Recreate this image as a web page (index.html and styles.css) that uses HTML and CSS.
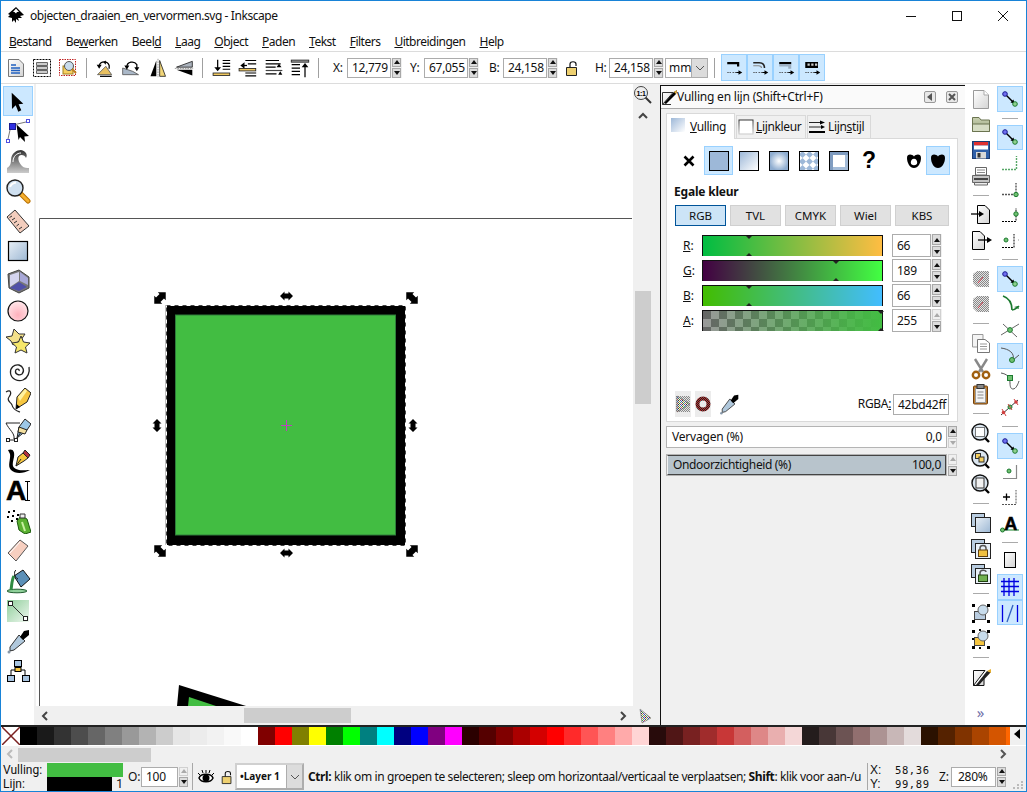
FILE: index.html
```html
<!DOCTYPE html>
<html lang="nl">
<head>
    <meta charset="UTF-8">
    <title>objecten_draaien_en_vervormen.svg - Inkscape</title>
    <link rel="stylesheet" href="styles.css">
</head>
<body>
<svg class="sprite" xmlns="http://www.w3.org/2000/svg">
    <defs>
        <linearGradient id="gBlueDown" x1="0" y1="0" x2="1" y2="1"><stop offset="0" stop-color="#e8eff6"/><stop offset="1" stop-color="#9db8d4"/></linearGradient>
        <linearGradient id="gFade" x1="0" y1="0" x2="1" y2="1"><stop offset="0" stop-color="#9db8d8"/><stop offset="1" stop-color="#fff"/></linearGradient>
        <radialGradient id="gPink" cx=".5" cy=".7" r=".7"><stop offset="0" stop-color="#ffb0bc"/><stop offset="1" stop-color="#ffe9ec"/></radialGradient>
        <linearGradient id="gGrey" x1="0" y1="0" x2="0" y2="1"><stop offset="0" stop-color="#333"/><stop offset="1" stop-color="#ccc"/></linearGradient>
        <linearGradient id="gPaper" x1="0" y1="0" x2="1" y2="1"><stop offset="0" stop-color="#fff"/><stop offset="1" stop-color="#d4d4d4"/></linearGradient>
        <linearGradient id="gGreen" x1="0" y1="0" x2="1" y2="1"><stop offset="0" stop-color="#8fce9a"/><stop offset="1" stop-color="#eef7ef"/></linearGradient>
        <linearGradient id="gFolder" x1="0" y1="0" x2="0" y2="1"><stop offset="0" stop-color="#c8d0b0"/><stop offset="1" stop-color="#9aa680"/></linearGradient>
        <pattern id="pCheck" width="7" height="7" patternUnits="userSpaceOnUse"><rect width="7" height="7" fill="#fff"/><path d="M3.500 0 7 3.500 3.500 7 0 3.500z" fill="#9db8d8"/></pattern>
        <pattern id="pDots" width="2" height="2" patternUnits="userSpaceOnUse"><rect width="2" height="2" fill="#e4e4e4"/><rect width="1" height="1" fill="#888"/><rect x="1" y="1" width="1" height="1" fill="#888"/></pattern>
        <pattern id="pRed" width="2" height="2" patternUnits="userSpaceOnUse"><rect width="2" height="2" fill="#222"/><rect width="1" height="1" fill="#c03030"/><rect x="1" y="1" width="1" height="1" fill="#c03030"/></pattern>
        <pattern id="pColor" width="4" height="4" patternUnits="userSpaceOnUse"><rect width="4" height="4" fill="#eee"/><rect width="1" height="1" fill="#3a9a3a"/><rect x="2" width="1" height="1" fill="#c05050"/><rect x="1" y="1" width="1" height="1" fill="#6a3aa0"/><rect x="3" y="1" width="1" height="1" fill="#333"/><rect y="2" width="1" height="1" fill="#c0a030"/><rect x="2" y="2" width="1" height="1" fill="#3060c0"/><rect x="1" y="3" width="1" height="1" fill="#40a080"/><rect x="3" y="3" width="1" height="1" fill="#555"/></pattern>

        <!-- gereedschap links -->
        <symbol id="t-select" viewBox="0 0 26 26"><path d="M6.700 4.700 18.300 15.700 13.600 16.300 16.300 22.300 13.300 23.700 10.700 17.300 7 21z"/></symbol>
        <symbol id="t-node" viewBox="0 0 26 26"><path d="M8 7 21 4M5 12 3 21" fill="none" stroke="#777"/><rect x="4.500" y="5.500" width="6" height="6" fill="#3030e0" stroke="#1a1a90"/><rect x="21.500" y="1.500" width="3" height="3" fill="#fff" stroke="#5050e0"/><rect x="1.500" y="21.500" width="3" height="3" fill="#fff" stroke="#5050e0"/><path d="M11.500 6.500 24 18 19.400 18.400 20 24 15 19 13.500 22z"/></symbol>
        <symbol id="t-tweak" viewBox="0 0 26 26"><path d="M2 25V20C4 19 6 17 6 12 6 5 12 2 16 2 21 3 23 7 21 10 20 7 16 6 14 8 12 11 15 16 17 18 19 20 22 20 24 20V25z" fill="url(#gGrey)"/><path d="M8 14C8 8 12 5 16 5" fill="none" stroke="#fff"/></symbol>
        <symbol id="t-zoom" viewBox="0 0 26 26"><path d="M15 15 23 23" stroke="#b87000" stroke-width="5" stroke-linecap="round"/><path d="M15.500 15.500 23 23" stroke="#f5b030" stroke-width="3" stroke-linecap="round"/><circle cx="10" cy="10" r="8" fill="#cfe0f0" stroke="#222" stroke-width="1.400"/><path d="M5 9C6 6 8 5 11 4.500" fill="none" stroke="#fff" stroke-width="2"/></symbol>
        <symbol id="t-measure" viewBox="0 0 26 26"><path d="M2 9 10 2 24 18 15 25z" fill="#f3cdbd" stroke="#333"/><path d="M4.500 9.500 7 8M7 12 10 10M9 15 12 13M11.500 18 14 16M14 21 17 19" stroke="#333" fill="none"/></symbol>
        <symbol id="t-rect" viewBox="0 0 26 26"><rect x="3.500" y="3.500" width="19" height="19" fill="url(#gBlueDown)" stroke="#000" stroke-width="1.200"/></symbol>
        <symbol id="t-box" viewBox="0 0 26 26"><path d="M3 6 14 2 24 9V20L14 25 4 20z" fill="#777" stroke="#444"/><path d="M5 7 14 4V13L5 19z" fill="#d4d4ee"/><path d="M15 4 23 10V17L15 13z" fill="#a8a8d8"/><path d="M5 20 14 14 22 19 14 23z" fill="#5050a8"/></symbol>
        <symbol id="t-ellipse" viewBox="0 0 26 26"><circle cx="13" cy="13" r="10" fill="url(#gPink)" stroke="#111" stroke-width="1.200"/></symbol>
        <symbol id="t-star" viewBox="0 0 26 26"><path d="M1 9 7 8 9 1 14 6 20 6 16 12 8 17 6 13z" fill="#f3e08a" stroke="#333"/><path d="M16 8 18.500 14 25 15 20.500 19 22 25 16 22 10 25 11.500 19 7 15 13.500 14z" fill="#f6e76a" stroke="#333"/></symbol>
        <symbol id="t-spiral" viewBox="0 0 26 26"><path d="M14 13C15 11 11 10 10.500 13 10 16 14 18 17 16 20 13 18 8 14 7 9 6 5 10 5.500 15 6 21 13 24 18 22 23 20 25 14 24 9" fill="none" stroke="#222" stroke-width="1.300"/></symbol>
        <symbol id="t-pencil" viewBox="0 0 26 26"><path d="M1 4C6 1 7 5 4 9 1 13 6 14 7 17 8 22 12 23 15 24" fill="none" stroke="#222" stroke-width="1.200"/><path d="M11 21 12 9 20 0 26 5 22 14z" fill="#f6c640" stroke="#222"/><path d="M13 9 20 1 22 3 15 13z" fill="#fff2a0"/><path d="M11 21 11.500 16 15 19z"/></symbol>
        <symbol id="t-pen" viewBox="0 0 26 26"><path d="M1 5H15M1 5C4 12 10 15 9 21" fill="none" stroke="#222"/><rect x="1.500" y="20.500" width="3" height="3" fill="#fff" stroke="#222"/><rect x="9.500" y="20.500" width="3" height="3" fill="#fff" stroke="#222"/><path d="M4 22H10" stroke="#222"/><path d="M12 20 14 9 20 1 26 6 22 12z" fill="#9cc8e8" stroke="#222"/><path d="M12 20 18 11" stroke="#222"/><path d="M14 9 22 12 20 16 13 14z" fill="#f4e0a0" stroke="#222"/></symbol>
        <symbol id="t-calli" viewBox="0 0 26 26"><path d="M3 2C8 0 10 4 9 9 8 14 6 19 11 21 15 23 19 22 25 22 18 26 10 26 6 22 2 18 6 11 5 6z"/><path d="M11 18 13 9 18 5 23 10 19 13z" fill="#f6c640" stroke="#222"/><path d="M18 5 20 2 25 7 23 10z" fill="#b03040" stroke="#222"/><path d="M11 18 16 11" stroke="#222"/></symbol>
        <symbol id="t-spray" viewBox="0 0 26 26"><path d="M12 13 16 8 22 11 26 24 20 26 14 22z" fill="#5ab030" stroke="#1d5a10"/><path d="M15 6H20V10H15z" fill="#eee" stroke="#333"/><path d="M17 14 20 23" stroke="#c8f0a0" stroke-width="2"/><path d="M3 3h2v2H3zM8 2h2v2H8zM2 8h2v2H2zM7 7h2v2H7zM12 6h2v2h-2zM6 12h2v2H6zM11 10h2v2h-2z"/></symbol>
        <symbol id="t-eraser" viewBox="0 0 26 26"><path d="M3 15 15 2 23 8 11 23z" fill="#f7cfc0" stroke="#555"/><path d="M5 15 15 4" stroke="#fff"/></symbol>
        <symbol id="t-bucket" viewBox="0 0 26 26"><ellipse cx="12" cy="23" rx="10" ry="1.800" fill="#8fd09a" stroke="#225c30"/><path d="M9 8 18 2 25 11 16 19z" fill="#5c90b8" stroke="#111"/><path d="M9 8C7 11 7 15 6 22" fill="none" stroke="#2f8a42" stroke-width="3"/><path d="M11 2C8 4 10 10 13 11" fill="none" stroke="#111"/></symbol>
        <symbol id="t-gradient" viewBox="0 0 26 26"><rect x="2" y="2" width="22" height="22" fill="url(#gGreen)"/><path d="M6 6 20 20" stroke="#333"/><rect x="3.500" y="3.500" width="4" height="4" fill="#fff" stroke="#222"/><rect x="18.500" y="18.500" width="4" height="4" fill="#fff" stroke="#222"/></symbol>
        <symbol id="t-dropper" viewBox="0 0 26 26"><path d="M14 7 20 13 9 22 5 23 5 19z" fill="#b0c8dc" stroke="#333"/><path d="M15 9 19 3 24 2 24 7 18 12z"/><circle cx="4" cy="24" r="1.500" fill="#89a"/></symbol>
        <symbol id="t-conn" viewBox="0 0 26 26"><path d="M6 20V12H20V20M13 8V12" fill="none" stroke="#000"/><rect x="9.500" y="2.500" width="7" height="6" fill="#a8c4e0" stroke="#000"/><rect x="10" y="9.500" width="6" height="4" fill="#f6c640" stroke="#000"/><rect x="2.500" y="17.500" width="7" height="6" fill="#a8c4e0" stroke="#000"/><rect x="17.500" y="17.500" width="7" height="6" fill="#a8c4e0" stroke="#000"/></symbol>

        <!-- opdrachtenbalk -->
        <symbol id="c-docprops" viewBox="0 0 22 22"><path d="M3.500 2.500H14L18.500 7V19.500H3.500z" fill="url(#gPaper)" stroke="#777"/><path d="M6 8H11M6 11H15M6 13.500H15M6 16H15" stroke="#2060c0" stroke-width="1.300"/></symbol>
        <symbol id="c-zoomsel" viewBox="0 0 22 22"><rect x="2.500" y="2.500" width="17" height="17" fill="#fff" stroke="#000" stroke-dasharray="2 1"/><path d="M5.500 5.500H16.500V8.500H5.500zM5.500 9.500H16.500V12.500H5.500zM5.500 13.500H16.500V16.500H5.500z" fill="#ccc" stroke="#666"/></symbol>
        <symbol id="c-zoomdraw" viewBox="0 0 22 22"><rect x="2.500" y="2.500" width="16" height="16" fill="#fff" stroke="#c02020" stroke-dasharray="1.500 1"/><rect x="6" y="9" width="10" height="8" fill="#f6d060" stroke="#a08020"/><circle cx="12" cy="9" r="4.500" fill="#c8dcec" stroke="#555"/><path d="M15 12 19 16" stroke="#c08020" stroke-width="2"/></symbol>
        <symbol id="c-rotccw" viewBox="0 0 24 24"><path d="M3 20 13 10 20 20z" fill="#e8c060" stroke="#555"/><path d="M6 22H20" stroke="#000" stroke-width="1.500"/><path d="M5 9C7 3 15 3 17 9V13" fill="none" stroke="#000" stroke-width="1.500"/><path d="M2 8 8 8 5 13zM13 3V8L10 5z"/></symbol>
        <symbol id="c-rotcw" viewBox="0 0 24 24"><path d="M2 20V12L14 16 21 20z" fill="#aab8c8" stroke="#555"/><path d="M7 11C7 4 16 3 19 8V12" fill="none" stroke="#000" stroke-width="1.500"/><path d="M16 11H22L19 16zM7 14 4 9H10z"/></symbol>
        <symbol id="c-fliph" viewBox="0 0 24 24"><path d="M10 3 3 22H10z"/><path d="M14 3 21 22H14z" fill="#f2d678" stroke="#222"/><path d="M12 1V23" stroke="#888" stroke-dasharray="2 1"/></symbol>
        <symbol id="c-flipv" viewBox="0 0 24 24"><path d="M22 4 3 11H22z" fill="#aab2bc" stroke="#222"/><path d="M22 14 3 14 22 21z"/><path d="M1 12.500H23" stroke="#888" stroke-dasharray="2 1"/></symbol>
        <symbol id="c-bottom" viewBox="0 0 24 24"><path d="M14 3H23M14 6.500H23M14 10H23M14 13.500H23" stroke="#000" stroke-width="1.400"/><path d="M8 2V14" stroke="#000" stroke-width="1.500"/><path d="M4 11H12L8 16z"/><rect x="2.500" y="18" width="20" height="3" fill="#f0c860" stroke="#222"/></symbol>
        <symbol id="c-lower" viewBox="0 0 24 24"><path d="M10 3H23M13 7H23M10 18H23M10 21.500H23" stroke="#000" stroke-width="1.400"/><path d="M4 9 9 5V13z"/><path d="M8 9H12" stroke="#000" stroke-width="1.500"/><rect x="2.500" y="12.500" width="20" height="3" fill="#f0c860" stroke="#222"/></symbol>
        <symbol id="c-raise" viewBox="0 0 24 24"><path d="M2 3H18M2 7H20M2 11H14M2 19H15" stroke="#000" stroke-width="1.400"/><path d="M2 15H22" stroke="#444" stroke-width="1.400"/><path d="M15 11 21 11 18 7zM18 11V13" fill="#000"/><path d="M17 16H22L19.500 20z" transform="rotate(180 19.500 18)"/></symbol>
        <symbol id="c-top" viewBox="0 0 24 24"><rect x="1.500" y="2.500" width="21" height="2.500" fill="#999" stroke="#222"/><path d="M2 8H12M2 12H12M2 16H12M2 20H12" stroke="#000" stroke-width="1.500"/><path d="M18 23V9" stroke="#000" stroke-width="1.500"/><path d="M14 11 18 6 22 11z"/></symbol>
        <symbol id="c-pat1" viewBox="0 0 24 24"><path d="M3 4H19V10H16V7H3z"/><path d="M3 18H8M10 18H15" stroke="#333" stroke-dasharray="2 1"/><path d="M15 18H19" stroke="#000" stroke-width="1.400"/><path d="M18 15 23 18 18 21z"/></symbol>
        <symbol id="c-pat2" viewBox="0 0 24 24"><path d="M3 5H11C15 5 18 7 18 12" fill="none" stroke="#222" stroke-width="2"/><path d="M3 9H10C12 9 14 10 14 12" fill="none" stroke="#888" stroke-width="1.500"/><path d="M3 18H8M10 18H15" stroke="#333" stroke-dasharray="2 1"/><path d="M15 18H19" stroke="#000" stroke-width="1.400"/><path d="M18 15 23 18 18 21z"/></symbol>
        <symbol id="c-pat3" viewBox="0 0 24 24"><path d="M3 4H19V7H3z"/><path d="M3 7H19V13H15V10H3z" fill="#9cb0c4"/><path d="M3 18H8M10 18H15" stroke="#333" stroke-dasharray="2 1"/><path d="M15 18H19" stroke="#000" stroke-width="1.400"/><path d="M18 15 23 18 18 21z"/></symbol>
        <symbol id="c-pat4" viewBox="0 0 24 24"><rect x="3" y="4" width="17" height="8"/><path d="M6 6h3v3H6zM11 6h3v3h-3zM16 6h3v3h-3z" fill="#ccc"/><path d="M3 18H8M10 18H15" stroke="#333" stroke-dasharray="2 1"/><path d="M15 18H19" stroke="#000" stroke-width="1.400"/><path d="M18 15 23 18 18 21z"/></symbol>

        <!-- rechts: bestand en bewerken -->
        <symbol id="r-new" viewBox="0 0 22 22"><path d="M3.500 2.500H14L18.500 7V20.500H3.500z" fill="url(#gPaper)" stroke="#999"/><path d="M14 2.500V7H18.500" fill="#fff" stroke="#aaa"/></symbol>
        <symbol id="r-open" viewBox="0 0 22 22"><path d="M2.500 18.500V4.500H9L11 7H19.500V18.500z" fill="url(#gFolder)" stroke="#6b7450"/><path d="M2.500 11H19.500V18.500H2.500z" fill="#d6ddc4" stroke="#6b7450"/></symbol>
        <symbol id="r-save" viewBox="0 0 22 22"><rect x="2.500" y="2.500" width="17" height="17" fill="#2f5fa8" stroke="#1b3a70"/><rect x="4" y="3" width="14" height="3.500" fill="#e03030"/><rect x="4" y="6.500" width="14" height="4" fill="#fff"/><rect x="6" y="13" width="10" height="6.500" fill="#d8d8d8"/><rect x="7.500" y="14" width="3" height="4.500" fill="#333"/></symbol>
        <symbol id="r-print" viewBox="0 0 22 22"><path d="M5.500 2.500H16.500V10H5.500z" fill="#fff" stroke="#666"/><path d="M7 5H15M7 7.500H15" stroke="#888"/><path d="M2.500 10.500H19.500V17.500H2.500z" fill="#c4c4c4" stroke="#666"/><path d="M4 14H18" stroke="#444" stroke-width="2"/><path d="M4.500 17.500H17.500V20H4.500z" fill="#eee" stroke="#666"/></symbol>
        <symbol id="r-import" viewBox="0 0 22 22"><path d="M7.500 2.500H15L19.500 7V20.500H7.500z" fill="url(#gPaper)" stroke="#000"/><path d="M1 11H10" stroke="#000" stroke-width="1.300"/><path d="M9 8 14 11 9 14z"/></symbol>
        <symbol id="r-export" viewBox="0 0 22 22"><path d="M2.500 2.500H10L14.500 7V20.500H2.500z" fill="url(#gPaper)" stroke="#000"/><path d="M8 11H18" stroke="#000" stroke-width="1.300"/><path d="M17 8 22 11 17 14z"/></symbol>
        <symbol id="r-undo" viewBox="0 0 22 22"><path d="M3 6 7 3H19V19H7L3 15z" fill="url(#pDots)"/><path d="M13 9 8 15" stroke="#d04050"/></symbol>
        <symbol id="r-copy" viewBox="0 0 22 22"><path d="M2.500 2.500H13V15H2.500z" fill="#f4f4f4" stroke="#999"/><path d="M7.500 7.500H15L19.500 11V20.500H7.500z" fill="#fff" stroke="#777"/><path d="M10 12H17M10 14.500H17M10 17H17" stroke="#999"/></symbol>
        <symbol id="r-cut" viewBox="0 0 22 22"><path d="M5 1 13 14M17 1 9 14" stroke="#888" stroke-width="2.400"/><circle cx="6" cy="17" r="3.200" fill="none" stroke="#a06010" stroke-width="2.400"/><circle cx="16" cy="17" r="3.200" fill="none" stroke="#a06010" stroke-width="2.400"/></symbol>
        <symbol id="r-paste" viewBox="0 0 22 22"><rect x="3.500" y="3" width="14" height="18" rx="1" fill="#c08030" stroke="#704010"/><rect x="5.500" y="5.500" width="10" height="14" fill="#f4f4f4" stroke="#999"/><rect x="7" y="1.500" width="7" height="4" fill="#888" stroke="#333"/><path d="M7.500 9H13.500M7.500 12H13.500M7.500 15H13.500" stroke="#888"/></symbol>
        <symbol id="r-zoomsel" viewBox="0 0 22 22"><path d="M14 15 19 20" stroke="#000" stroke-width="2.400"/><circle cx="10" cy="10" r="8" fill="#dbe6f0" stroke="#111" stroke-width="1.400"/><rect x="5.500" y="5.500" width="9" height="9" fill="#fff" stroke="#000" stroke-dasharray="1 1"/></symbol>
        <symbol id="r-zoomdraw" viewBox="0 0 22 22"><path d="M14 15 19 20" stroke="#000" stroke-width="2.400"/><circle cx="10" cy="10" r="8" fill="#dbe6f0" stroke="#111" stroke-width="1.400"/><rect x="5.500" y="5.500" width="5" height="5" fill="#f6d060" stroke="#333"/><rect x="9" y="9" width="5" height="5" fill="#f6d060" stroke="#333"/></symbol>
        <symbol id="r-zoompage" viewBox="0 0 22 22"><path d="M14 15 19 20" stroke="#000" stroke-width="2.400"/><circle cx="10" cy="10" r="8" fill="#dbe6f0" stroke="#111" stroke-width="1.400"/><rect x="6" y="5" width="8" height="10" fill="#f2f2f2" stroke="#333"/></symbol>
        <symbol id="r-dup" viewBox="0 0 22 22"><rect x="1.500" y="1.500" width="13" height="13" fill="#b8cce0" stroke="#222"/><rect x="5.500" y="5.500" width="15" height="15" fill="url(#gBlueDown)" stroke="#222"/></symbol>
        <symbol id="r-clone" viewBox="0 0 22 22"><rect x="1.500" y="1.500" width="13" height="13" fill="#b8cce0" stroke="#222"/><rect x="5.500" y="5.500" width="15" height="15" fill="#e8f0f8" stroke="#222"/><path d="M10 12V10C10 6.500 16 6.500 16 10V12" fill="none" stroke="#555" stroke-width="1.500"/><rect x="8.500" y="12" width="9" height="6.500" fill="#f0c040" stroke="#604010"/></symbol>
        <symbol id="r-unlink" viewBox="0 0 22 22"><rect x="1.500" y="1.500" width="13" height="13" fill="#b8cce0" stroke="#222"/><rect x="5.500" y="5.500" width="15" height="15" fill="#e8f0f8" stroke="#222"/><path d="M10 12V10C10 6.500 16 6.500 16 9" fill="none" stroke="#555" stroke-width="1.500"/><rect x="8.500" y="12" width="9" height="6.500" fill="#70b050" stroke="#204010"/></symbol>
        <symbol id="r-group" viewBox="0 0 22 22"><path d="M2 2h3v3H2zM17 2h3v3h-3zM2 18h3v3H2zM17 18h3v3h-3z"/><rect x="4.500" y="9.500" width="11" height="8" fill="#b8cce0" stroke="#444"/><circle cx="13" cy="8" r="5" fill="#c8dcec" stroke="#666"/></symbol>
        <symbol id="r-ungroup" viewBox="0 0 22 22"><path d="M2 2h3v3H2zM17 2h3v3h-3zM2 18h3v3H2zM17 18h3v3h-3zM2 10h2v2H2zM9 1h2v2H9zM9 19h2v2H9z"/><rect x="4.500" y="9.500" width="10" height="8" fill="#f6c640" stroke="#444"/><circle cx="13" cy="8" r="5" fill="#c8dcec" stroke="#666"/></symbol>
        <symbol id="r-xml" viewBox="0 0 22 22"><path d="M3.500 19.500V4.500H15L3.500 19.500H14V13" fill="url(#gPaper)" stroke="#111"/><path d="M6 19 17 5 21 6 9 19z" fill="#222"/><path d="M17 5 21 3 21 7z" fill="#e8b030"/></symbol>

        <!-- rechts: kleven -->
        <symbol id="s-snap" viewBox="0 0 22 22"><path d="M7 7 14 14" stroke="#000" stroke-width="1.400"/><path d="M11.500 14.500 15.500 15.500 14.500 11.500z"/><circle cx="6" cy="6" r="2.300" fill="#7070f0" stroke="#1a1a90"/><circle cx="16" cy="16" r="2.300" fill="#90d090" stroke="#1c7a30"/></symbol>
        <symbol id="s-bbox" viewBox="0 0 22 22"><path d="M3 17.500H17.500V4" fill="none" stroke="#58a868" stroke-width="1.400" stroke-dasharray="2 1"/></symbol>
        <symbol id="s-edge" viewBox="0 0 22 22"><path d="M3 16.500H17V5" fill="none" stroke="#555" stroke-width="1.400" stroke-dasharray="2 1"/><circle cx="17" cy="16.500" r="2.200" fill="#70c070" stroke="#1c7a30"/></symbol>
        <symbol id="s-corner" viewBox="0 0 22 22"><path d="M3 18.500H17V5" fill="none" stroke="#000" stroke-dasharray="2 1"/><circle cx="17" cy="11" r="2.200" fill="#70c070" stroke="#1c7a30"/></symbol>
        <symbol id="s-midbox" viewBox="0 0 22 22"><path d="M3 18.500H15V5" fill="none" stroke="#000" stroke-dasharray="2 1"/><circle cx="7" cy="11" r="2" fill="#70c070" stroke="#1c7a30"/><path d="M19 11h1" stroke="#999"/></symbol>
        <symbol id="s-path" viewBox="0 0 22 22"><path d="M4 3C10 5 13 9 13 17" fill="none" stroke="#1c7a30" stroke-width="1.600"/><path d="M13 17C15 17 18 15 20 13" fill="none" stroke="#1c7a30" stroke-width="1.600"/><path d="M15 14 20 16 19 13z" fill="#1c7a30"/></symbol>
        <symbol id="s-cross" viewBox="0 0 22 22"><path d="M2 16 20 5M4 5 18 18" stroke="#666"/><circle cx="11" cy="11" r="2.400" fill="#70c070" stroke="#1c7a30"/></symbol>
        <symbol id="s-nodes" viewBox="0 0 22 22"><path d="M2 3C10 4 16 8 14 15M14 15C16 13 18 12 20 10" fill="none" stroke="#555"/><circle cx="13" cy="15" r="2.500" fill="#70c070" stroke="#1c7a30"/></symbol>
        <symbol id="s-smooth" viewBox="0 0 22 22"><path d="M2 3C8 4 11 7 11 13 11 17 12 19 14 19 17 19 19 14 20 11" fill="none" stroke="#555"/><rect x="8.500" y="5.500" width="5" height="5" fill="#70c070" stroke="#1c7a30"/></symbol>
        <symbol id="s-mid" viewBox="0 0 22 22"><path d="M2 19 19 4" stroke="#333"/><circle cx="4.500" cy="16.500" r="1.800" fill="#d04040"/><circle cx="11" cy="11" r="2" fill="#70c070" stroke="#1c7a30"/><circle cx="17" cy="6" r="1.800" fill="#d04040"/><path d="M3 13 7 20M9 8 13 14M15 3 19 9" stroke="#d04040"/></symbol>
        <symbol id="s-bbmid" viewBox="0 0 22 22"><path d="M4 18.500H17.500V5" fill="none" stroke="#888" stroke-width="1.200"/><circle cx="10" cy="11" r="2" fill="#70c070" stroke="#1c7a30"/></symbol>
        <symbol id="s-center" viewBox="0 0 22 22"><path d="M3 18.500H17V4" fill="none" stroke="#555" stroke-dasharray="2 1"/><path d="M4 11H11M7.500 7.500V14.500" stroke="#000" stroke-width="1.300"/></symbol>
        <symbol id="s-text" viewBox="0 0 22 22"><path d="M2 18 H20" stroke="#58a868" stroke-width="1.400"/><circle cx="3.500" cy="18" r="2" fill="#70c070" stroke="#1c7a30"/><text x="11.500" y="17.500" class="icon-letter">A</text></symbol>
        <symbol id="s-page" viewBox="0 0 22 22"><rect x="5.500" y="2.500" width="11" height="15" fill="url(#gPaper)" stroke="#000"/></symbol>
        <symbol id="s-grid" viewBox="0 0 22 22"><path d="M2 5.500H20M2 10.500H20M2 15.500H20M5 2V20M10 2V20M15 2V20" stroke="#0000e0" stroke-width="1.300"/></symbol>
        <symbol id="s-guide" viewBox="0 0 22 22"><path d="M3.500 3V20M18.500 3V20" stroke="#0000e0" stroke-width="1.300"/><path d="M8 20 14 3" stroke="#3060c0" stroke-width="1.300"/></symbol>

        <!-- kleine pictogrammen -->
        <symbol id="i-lock" viewBox="0 0 16 18"><path d="M6 9V5C6 2 12 2 12 5V7" fill="none" stroke="#111" stroke-width="1.200"/><path d="M2.500 8.500H12.500V16.500H2.500z" fill="#eed070" stroke="#222"/></symbol>
        <symbol id="i-eye" viewBox="0 0 16 14"><path d="M1 8C3 3 13 3 15 8 13 13 3 13 1 8z" fill="#fff" stroke="#000" stroke-width="1.500"/><circle cx="8" cy="8" r="3.500"/><path d="M2 5 0 3M5 3 4 0M8 3V0M11 3 12 0M14 5 16 3" stroke="#000"/></symbol>
        <symbol id="i-wheel" viewBox="0 0 16 26"><rect width="16" height="26" fill="#ececec"/><rect x="1" y="5" width="14" height="16" fill="url(#pDots)"/><path d="M2 5 15 13 2 21z" fill="url(#pColor)" stroke="#666" stroke-width=".6"/></symbol>
        <symbol id="i-ring" viewBox="0 0 16 26"><rect width="16" height="26" fill="#ececec"/><circle cx="8" cy="13" r="5.500" fill="none" stroke="url(#pRed)" stroke-width="4"/></symbol>
        <symbol id="i-tab-stroke" viewBox="0 0 16 16"><rect x="1" y="1" width="14" height="14" fill="#fff" stroke="url(#gGrey)"/></symbol>
        <symbol id="i-tab-style" viewBox="0 0 16 16"><path d="M0 3.500H11M0 8H14" stroke="#222"/><path d="M0 13H16" stroke="#000" stroke-width="2"/><path d="M11 1.500 16 3.500 11 5.500zM12 6 16 8 12 10z"/></symbol>
        <symbol id="i-brush" viewBox="0 0 15 15"><path d="M0.500 14.500V2.500H11L0.500 14.500H9" fill="url(#gPaper)" stroke="#333"/><path d="M2 13 12 2 15 0 14 4 4 14z"/><path d="M12 2 15 0 14 4z" fill="#e8b030"/></symbol>
        <symbol id="f-none" viewBox="0 0 14 14"><path d="M2.500 2.500 11.500 11.500M11.500 2.500 2.500 11.500" stroke="#000" stroke-width="2.600"/></symbol>
        <symbol id="f-evenodd" viewBox="0 0 16 16"><path fill-rule="evenodd" d="M8 3.500C6 1 1 .5 1 5 1 10 4 15 8 15 12 15 15 10 15 5 15 .5 10 1 8 3.500ZM8 5.800C5.800 5.800 4.800 8 4.800 9.500 4.800 11.200 6 12.300 8 12.300 10 12.300 11.200 11.200 11.200 9.500 11.200 8 10.200 5.800 8 5.800Z"/></symbol>
        <symbol id="f-nonzero" viewBox="0 0 16 16"><path d="M8 3.500C6 1 1 .5 1 5 1 10 4 15 8 15 12 15 15 10 15 5 15 .5 10 1 8 3.500Z"/></symbol>
    </defs>
</svg>

<div class="window">
    <header class="titlebar">
        <svg class="app-logo" width="18" height="18" viewBox="0 0 18 18"><path d="M9 0 17 8 13 9 15 11 11 11 12 14 9 12 9 16 7 13 5 15 5 11 1 10 3 8 1 7z"/><path d="M9 1.500 12 5 10 5 9 6.500 7.500 5 6 5z" fill="#fff"/></svg>
        <span class="app-title">objecten_draaien_en_vervormen.svg - Inkscape</span>
        <div class="win-controls">
            <span class="win-btn"><svg width="10" height="10"><path d="M0 5.500H10" stroke="#111"/></svg></span>
            <span class="win-btn"><svg width="10" height="10"><rect x=".5" y=".5" width="9" height="9" fill="none" stroke="#111"/></svg></span>
            <span class="win-btn"><svg width="10" height="10"><path d="M0 0 10 10M10 0 0 10" stroke="#111"/></svg></span>
        </div>
    </header>

    <nav class="menubar">
        <span><u>B</u>estand</span>
        <span>Be<u>w</u>erken</span>
        <span>Beel<u>d</u></span>
        <span><u>L</u>aag</span>
        <span><u>O</u>bject</span>
        <span><u>P</u>aden</span>
        <span><u>T</u>ekst</span>
        <span><u>F</u>ilters</span>
        <span><u>U</u>itbreidingen</span>
        <span><u>H</u>elp</span>
    </nav>

    <div class="cmdbar">
        <div class="cmd-group">
            <span class="cmd"><svg class="ic22"><use href="#c-docprops"/></svg></span>
            <span class="cmd"><svg class="ic22"><use href="#c-zoomsel"/></svg></span>
            <span class="cmd"><svg class="ic22"><use href="#c-zoomdraw"/></svg></span>
        </div>
        <span class="vsep"></span>
        <div class="cmd-group cmd-group-wide">
            <span class="cmd"><svg class="ic20"><use href="#c-rotccw"/></svg></span>
            <span class="cmd"><svg class="ic20"><use href="#c-rotcw"/></svg></span>
            <span class="cmd"><svg class="ic20"><use href="#c-fliph"/></svg></span>
            <span class="cmd"><svg class="ic20"><use href="#c-flipv"/></svg></span>
        </div>
        <span class="vsep"></span>
        <div class="cmd-group cmd-group-wide">
            <span class="cmd"><svg class="ic20"><use href="#c-bottom"/></svg></span>
            <span class="cmd"><svg class="ic20"><use href="#c-lower"/></svg></span>
            <span class="cmd"><svg class="ic20"><use href="#c-raise"/></svg></span>
            <span class="cmd"><svg class="ic20"><use href="#c-top"/></svg></span>
        </div>
        <span class="vsep"></span>
        <label class="coord coord-x"><span class="coord-name">X:</span><span class="field">12,779</span><span class="spin"><i></i><i></i></span></label>
        <label class="coord coord-y"><span class="coord-name">Y:</span><span class="field">67,055</span><span class="spin"><i></i><i></i></span></label>
        <label class="coord coord-b"><span class="coord-name">B:</span><span class="field">24,158</span><span class="spin"><i></i><i></i></span></label>
        <svg class="cmd-lock"><use href="#i-lock"/></svg>
        <label class="coord coord-h"><span class="coord-name">H:</span><span class="field">24,158</span><span class="spin"><i></i><i></i></span></label>
        <span class="combo unit-combo"><span class="combo-text">mm</span><span class="combo-btn"><svg width="10" height="6"><path d="M1 1 5 5 9 1" fill="none" stroke="#555"/></svg></span></span>
        <span class="vsep vsep-unit"></span>
        <div class="cmd-group">
            <span class="cmd cmd-on"><svg class="ic18"><use href="#c-pat1"/></svg></span>
            <span class="cmd cmd-on"><svg class="ic18"><use href="#c-pat2"/></svg></span>
            <span class="cmd cmd-on"><svg class="ic18"><use href="#c-pat3"/></svg></span>
            <span class="cmd cmd-on"><svg class="ic18"><use href="#c-pat4"/></svg></span>
        </div>
    </div>

    <main class="workspace">
        <aside class="toolbox">
            <span class="tool tool-on"><svg class="ic26"><use href="#t-select"/></svg></span>
            <span class="tool"><svg class="ic26"><use href="#t-node"/></svg></span>
            <span class="tool"><svg class="ic26"><use href="#t-tweak"/></svg></span>
            <span class="tool"><svg class="ic26"><use href="#t-zoom"/></svg></span>
            <span class="tool"><svg class="ic26"><use href="#t-measure"/></svg></span>
            <span class="tool"><svg class="ic26"><use href="#t-rect"/></svg></span>
            <span class="tool"><svg class="ic26"><use href="#t-box"/></svg></span>
            <span class="tool"><svg class="ic26"><use href="#t-ellipse"/></svg></span>
            <span class="tool"><svg class="ic26"><use href="#t-star"/></svg></span>
            <span class="tool"><svg class="ic26"><use href="#t-spiral"/></svg></span>
            <span class="tool"><svg class="ic26"><use href="#t-pencil"/></svg></span>
            <span class="tool"><svg class="ic26"><use href="#t-pen"/></svg></span>
            <span class="tool"><svg class="ic26"><use href="#t-calli"/></svg></span>
            <span class="tool tool-text">A<svg class="ibeam" width="5" height="20"><path d="M0 .5H5M0 19.500H5M2.500 0V20" stroke="#000"/></svg></span>
            <span class="tool"><svg class="ic26"><use href="#t-spray"/></svg></span>
            <span class="tool"><svg class="ic26"><use href="#t-eraser"/></svg></span>
            <span class="tool"><svg class="ic26"><use href="#t-bucket"/></svg></span>
            <span class="tool"><svg class="ic26"><use href="#t-gradient"/></svg></span>
            <span class="tool"><svg class="ic26"><use href="#t-dropper"/></svg></span>
            <span class="tool"><svg class="ic26"><use href="#t-conn"/></svg></span>
        </aside>

        <section class="canvas-col">
            <div class="canvas-row">
                <div class="canvas">
                    <svg class="drawing" width="597" height="622" viewBox="36 84 597 622">
                        <defs>
                            <polygon id="h-arrow" points="-6.500,0 -2,-4.500 -2,-2.500 2,-2.500 2,-4.500 6.500,0 2,4.500 2,2.500 -2,2.500 -2,4.500"/>
                        </defs>
                        <path d="M39.500 706V218.500H632" fill="none" stroke="#555"/>
                        <path d="M179 685 246 706H177z"/>
                        <path d="M189 697 216 706H188z" fill="#42bd42"/>
                        <rect x="170.750" y="310" width="229.500" height="230" fill="#42bd42" stroke="#000" stroke-width="10"/>
                        <rect x="175.500" y="315" width="220" height="220" fill="none" stroke="#2e7d3a"/>
                        <rect x="166.500" y="305.500" width="239" height="240" fill="none" stroke="#fff"/>
                        <rect x="166.500" y="305.500" width="239" height="240" fill="none" stroke="#444" stroke-dasharray="4 4"/>
                        <path d="M281 425.500H292M286.500 420V431" stroke="#c040c0"/>
                        <use href="#h-arrow" transform="translate(160 298) rotate(-45) scale(1.250)"/>
                        <use href="#h-arrow" transform="translate(412 298) rotate(45) scale(1.250)"/>
                        <use href="#h-arrow" transform="translate(412 551) rotate(-45) scale(1.250)"/>
                        <use href="#h-arrow" transform="translate(160 551) rotate(45) scale(1.250)"/>
                        <use href="#h-arrow" transform="translate(286.500 296)"/>
                        <use href="#h-arrow" transform="translate(286.500 553)"/>
                        <use href="#h-arrow" transform="translate(157 425.500) rotate(90)"/>
                        <use href="#h-arrow" transform="translate(413 425.500) rotate(90)"/>
                    </svg>
                </div>
                <div class="vscroll">
                    <svg class="zoom-one" width="20" height="20" viewBox="0 0 20 20"><path d="M12 12 18 18" stroke="#333" stroke-width="2"/><circle cx="8" cy="8" r="6.500" fill="#eee" stroke="#444"/><text x="8" y="10.500" class="icon-small">1:1</text></svg>
                    <svg class="arrow-up" width="10" height="7"><path d="M1 6 5 2 9 6" fill="none" stroke="#444" stroke-width="2"/></svg>
                    <span class="vthumb"></span>
                </div>
            </div>
            <div class="hscroll">
                <svg class="arrow-left" width="7" height="10"><path d="M6 1 2 5 6 9" fill="none" stroke="#444" stroke-width="2"/></svg>
                <span class="hthumb"></span>
                <svg class="arrow-right" width="7" height="10"><path d="M1 1 5 5 1 9" fill="none" stroke="#444" stroke-width="2"/></svg>
                <svg class="cms-icon" width="14" height="16" viewBox="0 0 14 16"><path d="M2 1 13 10 4 15z" fill="url(#pColor)" stroke="#777" stroke-width=".6"/></svg>
            </div>
        </section>

        <aside class="dock">
            <div class="dock-title">
                <svg class="dock-icon"><use href="#i-brush"/></svg>
                <span>Vulling en lijn (Shift+Ctrl+F)</span>
                <span class="dock-btn dock-btn-first"><svg width="6" height="8"><path d="M5 0V8L0 4z" fill="#555"/></svg></span>
                <span class="dock-btn"><svg width="8" height="8"><path d="M1 1 7 7M7 1 1 7" stroke="#555" stroke-width="2"/></svg></span>
            </div>
            <div class="tabs">
                <span class="tab tab-on tab-fill"><svg class="tab-swatch" viewBox="0 0 14 14"><rect width="14" height="14" fill="url(#gFade)"/></svg><span><u>V</u>ulling</span></span>
                <span class="tab tab-stroke"><svg class="ic16"><use href="#i-tab-stroke"/></svg><span><u>L</u>ijnkleur</span></span>
                <span class="tab tab-style"><svg class="ic16"><use href="#i-tab-style"/></svg><span>Lijn<u>s</u>tijl</span></span>
            </div>
            <div class="panel">
                <div class="fill-modes">
                    <span class="fill-btn"><svg class="ic14"><use href="#f-none"/></svg></span>
                    <span class="fill-btn fill-on"><span class="fill-swatch swatch-flat"></span></span>
                    <span class="fill-btn"><span class="fill-swatch swatch-linear"></span></span>
                    <span class="fill-btn"><span class="fill-swatch swatch-radial"></span></span>
                    <span class="fill-btn"><svg width="20" height="20"><rect x=".5" y=".5" width="19" height="19" fill="url(#pCheck)" stroke="#000"/></svg></span>
                    <span class="fill-btn"><span class="fill-swatch swatch-paint"></span></span>
                    <span class="fill-btn fill-unknown">?</span>
                    <span class="fill-rule"><svg class="ic16"><use href="#f-evenodd"/></svg></span>
                    <span class="fill-rule fill-rule-on"><svg class="ic16"><use href="#f-nonzero"/></svg></span>
                </div>
                <div class="fill-name">Egale kleur</div>
                <div class="mode-tabs">
                    <span class="mode mode-on">RGB</span>
                    <span class="mode">TVL</span>
                    <span class="mode">CMYK</span>
                    <span class="mode">Wiel</span>
                    <span class="mode mode-last">KBS</span>
                </div>
                <div class="sliders">
                    <div class="slider-row">
                        <span class="slider-name"><u>R</u>:</span>
                        <span class="slider slider-r"><i class="mark" style="left:25.900%"></i></span>
                        <span class="field slider-value">66</span>
                        <span class="spin spin-tall"><i></i><i></i></span>
                    </div>
                    <div class="slider-row">
                        <span class="slider-name"><u>G</u>:</span>
                        <span class="slider slider-g"><i class="mark" style="left:74.100%"></i></span>
                        <span class="field slider-value">189</span>
                        <span class="spin spin-tall"><i></i><i></i></span>
                    </div>
                    <div class="slider-row">
                        <span class="slider-name"><u>B</u>:</span>
                        <span class="slider slider-b"><i class="mark" style="left:25.900%"></i></span>
                        <span class="field slider-value">66</span>
                        <span class="spin spin-tall"><i></i><i></i></span>
                    </div>
                    <div class="slider-row">
                        <span class="slider-name"><u>A</u>:</span>
                        <span class="slider slider-a"><i class="mark" style="left:99.500%"></i></span>
                        <span class="field slider-value">255</span>
                        <span class="spin spin-tall spin-top-off"><i></i><i></i></span>
                    </div>
                </div>
                <div class="rgba-row">
                    <svg class="wheel-btn"><use href="#i-wheel"/></svg>
                    <svg class="wheel-btn"><use href="#i-ring"/></svg>
                    <svg class="rgba-dropper" viewBox="0 0 26 26"><use href="#t-dropper"/></svg>
                    <span class="rgba-label">RGBA<u>:</u></span>
                    <span class="field rgba-field">42bd42ff</span>
                </div>
            </div>
            <div class="scale-row">
                <div class="scale"><span>Vervagen (%)</span><span>0,0</span></div>
                <span class="spin spin-scale spin-bottom-off"><i></i><i></i></span>
            </div>
            <div class="scale-row scale-row-opacity">
                <div class="scale scale-full"><span>Ondoorzichtigheid (%)</span><span>100,0</span></div>
                <span class="spin spin-scale spin-top-off"><i></i><i></i></span>
            </div>
        </aside>

        <aside class="cmd-col">
            <span class="side"><svg class="ic22"><use href="#r-new"/></svg></span>
            <span class="side"><svg class="ic22"><use href="#r-open"/></svg></span>
            <span class="side"><svg class="ic22"><use href="#r-save"/></svg></span>
            <span class="side"><svg class="ic22"><use href="#r-print"/></svg></span>
            <span class="side-sep"></span>
            <span class="side"><svg class="ic22"><use href="#r-import"/></svg></span>
            <span class="side"><svg class="ic22"><use href="#r-export"/></svg></span>
            <span class="side-sep"></span>
            <span class="side"><svg class="ic22"><use href="#r-undo"/></svg></span>
            <span class="side"><svg class="ic22"><use href="#r-undo"/></svg></span>
            <span class="side-sep"></span>
            <span class="side"><svg class="ic22"><use href="#r-copy"/></svg></span>
            <span class="side"><svg class="ic22"><use href="#r-cut"/></svg></span>
            <span class="side"><svg class="ic22"><use href="#r-paste"/></svg></span>
            <span class="side-sep"></span>
            <span class="side"><svg class="ic22"><use href="#r-zoomsel"/></svg></span>
            <span class="side"><svg class="ic22"><use href="#r-zoomdraw"/></svg></span>
            <span class="side"><svg class="ic22"><use href="#r-zoompage"/></svg></span>
            <span class="side-sep"></span>
            <span class="side"><svg class="ic22"><use href="#r-dup"/></svg></span>
            <span class="side"><svg class="ic22"><use href="#r-clone"/></svg></span>
            <span class="side"><svg class="ic22"><use href="#r-unlink"/></svg></span>
            <span class="side-sep"></span>
            <span class="side"><svg class="ic22"><use href="#r-group"/></svg></span>
            <span class="side"><svg class="ic22"><use href="#r-ungroup"/></svg></span>
            <span class="side-sep"></span>
            <span class="side"><svg class="ic22"><use href="#r-xml"/></svg></span>
            <span class="side side-more">»</span>
        </aside>

        <aside class="snap-col">
            <span class="side side-on"><svg class="ic22"><use href="#s-snap"/></svg></span>
            <span class="side-sep"></span>
            <span class="side side-on"><svg class="ic22"><use href="#s-snap"/></svg></span>
            <span class="side"><svg class="ic22"><use href="#s-bbox"/></svg></span>
            <span class="side"><svg class="ic22"><use href="#s-edge"/></svg></span>
            <span class="side"><svg class="ic22"><use href="#s-corner"/></svg></span>
            <span class="side"><svg class="ic22"><use href="#s-midbox"/></svg></span>
            <span class="side-sep"></span>
            <span class="side side-on"><svg class="ic22"><use href="#s-snap"/></svg></span>
            <span class="side"><svg class="ic22"><use href="#s-path"/></svg></span>
            <span class="side"><svg class="ic22"><use href="#s-cross"/></svg></span>
            <span class="side side-on"><svg class="ic22"><use href="#s-nodes"/></svg></span>
            <span class="side"><svg class="ic22"><use href="#s-smooth"/></svg></span>
            <span class="side"><svg class="ic22"><use href="#s-mid"/></svg></span>
            <span class="side-sep"></span>
            <span class="side side-on"><svg class="ic22"><use href="#s-snap"/></svg></span>
            <span class="side"><svg class="ic22"><use href="#s-bbmid"/></svg></span>
            <span class="side"><svg class="ic22"><use href="#s-center"/></svg></span>
            <span class="side"><svg class="ic22"><use href="#s-text"/></svg></span>
            <span class="side-sep"></span>
            <span class="side"><svg class="ic22"><use href="#s-page"/></svg></span>
            <span class="side side-on"><svg class="ic22"><use href="#s-grid"/></svg></span>
            <span class="side side-on"><svg class="ic22"><use href="#s-guide"/></svg></span>
        </aside>
    </main>

    <div class="palette">
        <div class="swatches">
            <svg class="swatch-none" width="18" height="18"><rect width="18" height="18" fill="#fff"/><path d="M0 0 18 18M18 0 0 18" stroke="#7a2020" stroke-width="1.500"/></svg>
            <i style="background:#000"></i><i style="background:#1a1a1a"></i><i style="background:#333"></i><i style="background:#4d4d4d"></i><i style="background:#666"></i><i style="background:#808080"></i><i style="background:#999"></i><i style="background:#b3b3b3"></i><i style="background:#ccc"></i><i style="background:#e6e6e6"></i><i style="background:#ececec"></i><i style="background:#f2f2f2"></i><i style="background:#f9f9f9"></i><i style="background:#fff"></i>
            <i style="background:#800000"></i><i style="background:#f00"></i><i style="background:#808000"></i><i style="background:#ff0"></i><i style="background:#008000"></i><i style="background:#0f0"></i><i style="background:#008080"></i><i style="background:#0ff"></i><i style="background:#000080"></i><i style="background:#00f"></i><i style="background:#800080"></i><i style="background:#f0f"></i>
            <i style="background:#2b0000"></i><i style="background:#550000"></i><i style="background:#800000"></i><i style="background:#aa0000"></i><i style="background:#d40000"></i><i style="background:#f00"></i><i style="background:#ff2a2a"></i><i style="background:#f55"></i><i style="background:#ff8080"></i><i style="background:#faa"></i><i style="background:#ffd5d5"></i>
            <i style="background:#280b0b"></i><i style="background:#501616"></i><i style="background:#782121"></i><i style="background:#a02c2c"></i><i style="background:#c83737"></i><i style="background:#d35f5f"></i><i style="background:#de8787"></i><i style="background:#e9afaf"></i><i style="background:#f4d7d7"></i>
            <i style="background:#241c1c"></i><i style="background:#483737"></i><i style="background:#6c5353"></i><i style="background:#916f6f"></i><i style="background:#ac9393"></i><i style="background:#c8b7b7"></i><i style="background:#e3dbdb"></i>
            <i style="background:#2b1100"></i><i style="background:#552200"></i><i style="background:#803300"></i><i style="background:#a40"></i><i style="background:#d45500"></i><i style="background:#f60"></i>
        </div>
        <svg class="palette-menu" width="6" height="10"><path d="M6 0V10L0 5z"/></svg>
    </div>

    <div class="palette-scroll">
        <svg class="arrow-left" width="7" height="10"><path d="M6 1 2 5 6 9" fill="none" stroke="#bbb" stroke-width="2"/></svg>
        <span class="pthumb"></span>
        <svg class="arrow-right" width="7" height="10"><path d="M1 1 5 5 1 9" fill="none" stroke="#555" stroke-width="2"/></svg>
    </div>

    <footer class="statusbar">
        <div class="style-box">
            <span>Vulling:</span><span class="style-fill"></span>
            <span>Lijn:</span><span class="style-stroke"><b></b><em>1</em></span>
        </div>
        <label class="opacity"><span class="opacity-name">O:</span><span class="field">100</span><span class="spin spin-top-off"><i></i><i></i></span></label>
        <span class="status-sep"></span>
        <svg class="status-eye"><use href="#i-eye"/></svg>
        <svg class="status-lock"><use href="#i-lock"/></svg>
        <span class="combo layer-combo"><span class="combo-text">•Layer 1</span><span class="combo-btn"><svg width="10" height="6"><path d="M1 1 5 5 9 1" fill="none" stroke="#555"/></svg></span></span>
        <div class="status-text"><b>Ctrl:</b> klik om in groepen te selecteren; sleep om horizontaal/verticaal te verplaatsen; <b>Shift</b>: klik voor aan-/u</div>
        <span class="status-sep status-sep-coords"></span>
        <div class="mouse-coords">
            <span>X:</span><span class="coord-val">58,36</span>
            <span>Y:</span><span class="coord-val">99,89</span>
        </div>
        <label class="zoom-field"><span class="zoom-name">Z:</span><span class="field">280%</span><span class="spin"><i></i><i></i></span></label>
        <svg class="grip" width="10" height="8"><path d="M8 0h2v2H8zM4 3h2v2H4zM8 3h2v2H8zM0 6h2v2H0zM4 6h2v2H4zM8 6h2v2H8z" fill="#bbb"/></svg>
    </footer>
</div>
</body>
</html>
```

FILE: styles.css
```css
* {
    box-sizing: border-box;
}

html, body {
    margin: 0;
    padding: 0;
    overflow: hidden;
}

body {
    font: 12px/16px "Noto Sans", "Open Sans", sans-serif;
    letter-spacing: -.35px;
    color: #111;
}

u {
    text-underline-offset: 1px;
}

i, em {
    font-style: normal;
}

.sprite {
    display: block;
    width: 0;
    height: 0;
}

.ic14 { width: 14px; height: 14px; }
.ic16 { width: 16px; height: 16px; }
.ic18 { width: 18px; height: 18px; }
.ic20 { width: 20px; height: 20px; }
.ic22 { width: 22px; height: 22px; }
.ic26 { width: 26px; height: 26px; }

.icon-letter {
    font: bold 18px "Liberation Sans", sans-serif;
    text-anchor: middle;
    stroke: #000;
    stroke-width: .5px;
}

.icon-small {
    font: bold 7px "Liberation Sans", sans-serif;
    text-anchor: middle;
    letter-spacing: -.3px;
}

.window {
    width: 1027px;
    height: 792px;
    display: flex;
    flex-direction: column;
    border: 1px solid #1883d7;
    background: #f0f0f0;
}

/* titelbalk */
.titlebar {
    height: 29px;
    flex: none;
    display: flex;
    align-items: center;
    padding-left: 6px;
    background: #fff;
}

.app-logo {
    margin-right: 5px;
}

.app-title {
    letter-spacing: -.42px;
}

.win-controls {
    display: flex;
    margin-left: auto;
}

.win-btn {
    width: 46px;
    height: 29px;
    display: flex;
    align-items: center;
    justify-content: center;
}

/* menu */
.menubar {
    height: 21px;
    flex: none;
    display: flex;
    align-items: center;
    gap: 14px;
    padding: 2px 0 0 8px;
    background: #fff;
    letter-spacing: -.5px;
}

/* opdrachten */
.cmdbar {
    height: 33px;
    flex: none;
    display: flex;
    align-items: center;
    padding-left: 2px;
    background: #fff;
    border-top: 1px solid #dcdcdc;
    border-bottom: 1px solid #dcdcdc;
}

.cmd-group {
    display: flex;
}

.cmd {
    width: 26px;
    height: 27px;
    display: flex;
    align-items: center;
    justify-content: center;
}

.cmd-group-wide .cmd {
    width: 26.250px;
}

.cmd-on {
    background: #cce8ff;
    border: 1px solid #99d1ff;
}

.vsep {
    width: 1px;
    height: 20px;
    margin: 0 5px;
    background: #a0a0a0;
}

.vsep-unit {
    margin: 0 6px;
}

.coord {
    display: flex;
    align-items: center;
}

.coord-name {
    width: 14px;
}

.coord-x { margin-left: 9px; }
.coord-y { margin-left: 8px; }
.coord-b { margin-left: 10px; }
.coord-h { margin-left: 15px; }

.field {
    display: block;
    width: 44px;
    height: 20px;
    padding-left: 4px;
    line-height: 18px;
    background: #fff;
    border: 1px solid #acacac;
    letter-spacing: -.3px;
}

.spin {
    width: 11px;
    height: 20px;
    display: flex;
    flex-direction: column;
    gap: 1px;
    padding: 0 1px;
    background: #f0f0f0;
}

.spin i {
    flex: 1;
    display: flex;
    align-items: center;
    justify-content: center;
    background: #dcdcdc;
    border: 1px solid #a8a8a8;
}

.spin i::before {
    content: "";
    border-left: 3px solid transparent;
    border-right: 3px solid transparent;
    border-bottom: 4px solid #111;
}

.spin i + i::before {
    border-bottom: 0;
    border-top: 4px solid #111;
}

.spin-top-off i:first-child,
.spin-bottom-off i:last-child {
    background: #f0f0f0;
    border-color: #d0d0d0;
}

.spin-top-off i:first-child::before {
    border-bottom-color: #aaa;
}

.spin-bottom-off i:last-child::before {
    border-top-color: #aaa;
}

.cmd-lock {
    width: 16px;
    height: 18px;
    margin-left: 6px;
}

.combo {
    display: flex;
    background: #fff;
    border: 1px solid #adadad;
}

.combo-text {
    flex: 1;
    padding-left: 3px;
}

.combo-btn {
    width: 16px;
    display: flex;
    align-items: center;
    justify-content: center;
    background: #dcdcdc;
    border-left: 1px solid #adadad;
}

.unit-combo {
    width: 43px;
    height: 20px;
    margin-left: 1px;
    line-height: 18px;
    letter-spacing: 0;
}

/* werkruimte */
.workspace {
    height: 641px;
    flex: none;
    display: flex;
}

.toolbox {
    width: 35px;
    flex: none;
    padding: 2px 0 0 2px;
    background: #fff;
    border-right: 2px solid #f0f0f0;
}

.tool {
    width: 30px;
    height: 30px;
    display: flex;
    align-items: center;
    justify-content: center;
}

.tool-on {
    background: #cce8ff;
    border: 1px solid #99d1ff;
}

.tool-text {
    font: bold 28px/30px "Liberation Sans", sans-serif;
    color: #000;
    letter-spacing: 0;
    -webkit-text-stroke: .6px #000;
}

.ibeam {
    margin-left: -1px;
}

.canvas-col {
    width: 624px;
    flex: none;
    display: flex;
    flex-direction: column;
}

.canvas-row {
    flex: 1;
    display: flex;
    min-height: 0;
}

.canvas {
    width: 597px;
    background: #fff;
    overflow: hidden;
}

.drawing {
    display: block;
}

.vscroll {
    flex: 1;
    display: flex;
    flex-direction: column;
    align-items: center;
    padding-right: 7px;
}

.zoom-one {
    margin-top: 1px;
}

.arrow-up {
    margin-top: 7px;
}

.vthumb {
    width: 16px;
    height: 113px;
    margin-top: 172px;
    background: #cdcdcd;
}

.hscroll {
    height: 19px;
    flex: none;
    display: flex;
    align-items: center;
    padding-left: 5px;
}

.hthumb {
    width: 107px;
    height: 15px;
    margin-left: 196px;
    background: #cdcdcd;
}

.hscroll .arrow-right {
    margin-left: 269px;
}

.cms-icon {
    margin-left: 11px;
}

/* dock */
.dock {
    width: 305px;
    flex: none;
    margin-top: 1px;
    padding-right: 7px;
    border-left: 1px solid #111;
    border-top: 1px solid #111;
    display: flex;
    flex-direction: column;
}

.dock-title {
    height: 23px;
    margin-right: -7px;
    flex: none;
    display: flex;
    align-items: center;
    padding-left: 1px;
    background: #fafafa;
    border-bottom: 1px solid #a8a8a8;
    letter-spacing: -.2px;
}

.dock-icon {
    width: 15px;
    height: 15px;
}

.dock-btn {
    width: 12px;
    height: 12px;
    margin-left: 10px;
    display: flex;
    align-items: center;
    justify-content: center;
    background: #e8e8e8;
    border: 1px solid #999;
    border-radius: 2px;
}

.dock-btn-first {
    margin-left: auto;
}

.dock-btn + .dock-btn {
    margin-right: 7px;
}

.tabs {
    height: 29px;
    flex: none;
    display: flex;
    align-items: flex-end;
    margin-left: 5px;
}

.tab {
    height: 23px;
    display: flex;
    align-items: center;
    gap: 3px;
    background: #f0f0f0;
    border: 1px solid #d9d9d9;
    border-bottom: 0;
    margin-right: 1px;
}

.tab-on {
    height: 26px;
    margin-bottom: -1px;
    background: #fff;
    position: relative;
    z-index: 1;
}

.tab-swatch {
    width: 14px;
    height: 14px;
    margin-top: -3px;
}

.tab-fill { width: 69px; padding-left: 4px; gap: 5px; }
.tab-stroke { width: 70px; padding-left: 1px; gap: 2px; }
.tab-style { width: 64px; padding-left: 1px; }

.panel {
    height: 284px;
    flex: none;
    margin-left: 5px;
    padding: 7px 0 4px 7px;
    display: flex;
    flex-direction: column;
    background: #fff;
    border: 1px solid #d9d9d9;
    letter-spacing: 0;
}

.fill-modes {
    height: 29px;
    flex: none;
    display: flex;
    align-items: center;
}

.fill-btn {
    width: 30px;
    height: 29px;
    display: flex;
    align-items: center;
    justify-content: center;
}

.fill-on {
    width: 29px;
    margin-right: 1px;
    background: #cce8ff;
    border: 1px solid #99d1ff;
}

.fill-swatch {
    width: 20px;
    height: 20px;
    display: block;
    border: 1px solid #000;
}

.swatch-flat { background: #9db8d8; }
.swatch-linear { background: linear-gradient(135deg, #9db8d8, #fff); }
.swatch-radial { background: radial-gradient(circle, #fff, #8fadd0 75%); }
.swatch-paint { background: #fff; box-shadow: inset 3px 3px 0 #7f9cc0, inset -3px -3px 0 #a4bcd8; }

.fill-unknown {
    font: bold 23px/29px "Liberation Sans", sans-serif;
    color: #000;
}

.fill-rule {
    width: 24px;
    height: 29px;
    display: flex;
    align-items: center;
    justify-content: center;
}

.fill-rule-on {
    background: #cce8ff;
    border: 1px solid #99d1ff;
}

.fill-modes .fill-unknown + .fill-rule {
    margin-left: 18px;
}

.fill-name {
    margin-top: 9px;
    flex: none;
    font-weight: bold;
    letter-spacing: -.2px;
}

.mode-tabs {
    display: flex;
    flex: none;
    gap: 4px;
    margin-top: 5px;
    padding-left: 1px;
}

.mode {
    width: 51px;
    height: 21px;
    line-height: 19px;
    text-align: center;
    background: #e1e1e1;
    border: 1px solid #d0d0d0;
    font-size: 11.500px;
}

.mode-on {
    background: #cce4f7;
    border: 1px solid #005499;
}

.mode-last {
    width: 54px;
}

.sliders {
    flex: none;
    margin-top: 8px;
    display: flex;
    flex-direction: column;
    gap: 2px;
}

.slider-row {
    height: 23px;
    display: flex;
    align-items: center;
}

.slider-name {
    width: 28px;
    padding-left: 9px;
}

.slider {
    width: 181px;
    height: 21px;
    display: block;
    position: relative;
    border: 1px solid #111;
    border-bottom: 0;
}

.slider-r { background: linear-gradient(90deg, #00bd42, #ffbd42); }
.slider-g { background: linear-gradient(90deg, #420042, #42ff42); }
.slider-b { background: linear-gradient(90deg, #42bd00, #42bdff); }

.slider-a {
    background:
        linear-gradient(90deg, rgba(66, 189, 66, 0), #42bd42),
        conic-gradient(#999 25%, #666 0 50%, #999 0 75%, #666 0) 0 0 / 16px 16px;
}

.mark {
    position: absolute;
    top: 0;
    width: 0;
    height: 100%;
    margin-left: -3px;
}

.mark::before,
.mark::after {
    content: "";
    position: absolute;
    left: 0;
    border-left: 3px solid transparent;
    border-right: 3px solid transparent;
}

.mark::before {
    top: 0;
    border-top: 3px solid #222;
}

.mark::after {
    bottom: 0;
    border-bottom: 3px solid #222;
}

.slider-value {
    width: 39px;
    height: 23px;
    margin-left: 9px;
    line-height: 21px;
}

.spin-tall {
    height: 23px;
}

.rgba-row {
    margin-top: auto;
    flex: none;
    display: flex;
    align-items: center;
    height: 26px;
    padding-left: 1px;
}

.wheel-btn {
    width: 16px;
    height: 26px;
    margin-right: 4px;
}

.rgba-dropper {
    width: 22px;
    height: 22px;
    margin-left: 3px;
}

.rgba-label {
    margin-left: auto;
    margin-right: 2px;
    letter-spacing: -.35px;
}

.rgba-field {
    width: 56px;
    height: 21px;
    margin-right: 8px;
    line-height: 19px;
}

.scale-row {
    height: 22px;
    flex: none;
    display: flex;
    margin: 4px 0 0 5px;
}

.scale-row-opacity {
    margin-top: 6px;
}

.scale {
    flex: 1;
    display: flex;
    justify-content: space-between;
    align-items: center;
    padding: 0 4px 0 5px;
    background: #fff;
    border: 1px solid #b4b4b4;
    letter-spacing: -.2px;
}

.scale-full {
    background: #b8c4cc;
    border: 2px solid #f0f0f0;
    border-top-color: #444;
    border-right-color: #444;
    border-bottom-color: #444;
    outline: 1px solid #b4b4b4;
    outline-offset: -1px;
    letter-spacing: -.35px;
}

.spin-scale {
    width: 11px;
    height: 22px;
    padding-left: 1px;
}

/* rechter kolommen */
.cmd-col,
.snap-col {
    flex: none;
    display: flex;
    flex-direction: column;
    align-items: center;
    padding-top: 2px;
    background: #fff;
}

.cmd-col {
    width: 31px;
}

.snap-col {
    width: 30px;
    padding-right: 2px;
}

.side {
    width: 26px;
    height: 25.670px;
    flex: none;
    display: flex;
    align-items: center;
    justify-content: center;
}

.side-on {
    background: #cce8ff;
    border: 1px solid #99d1ff;
}

.side-sep {
    width: 16px;
    height: 1px;
    flex: none;
    margin: 6px 0;
    background: #aaa;
}

.side-more {
    margin-top: 9px;
    font-size: 15px;
    color: #7070a8;
}

/* palet */
.palette {
    height: 21px;
    flex: none;
    display: flex;
    align-items: flex-start;
    padding-left: 1px;
    border-top: 2px solid #222;
    border-bottom: 1px solid #fff;
}

.swatches {
    width: 1008px;
    height: 18px;
    display: flex;
    overflow: hidden;
}

.swatches i {
    width: 17px;
    height: 18px;
    flex: none;
}

.swatch-none {
    flex: none;
}

.palette-menu {
    margin: 2px 0 0 4px;
}

.palette-scroll {
    height: 16px;
    flex: none;
    display: flex;
    align-items: center;
    padding-left: 5px;
}

.pthumb {
    width: 133px;
    height: 14px;
    margin: 1px 0 0 5px;
    background: #cdcdcd;
}

.palette-scroll .arrow-right {
    margin-left: 849px;
}

/* statusbalk */
.statusbar {
    height: 29px;
    flex: none;
    display: flex;
    align-items: center;
    letter-spacing: 0;
}

.style-box {
    width: 122px;
    flex: none;
    margin-left: 2px;
    display: grid;
    grid-template-columns: 44px 76px;
    grid-template-rows: 14px 14px;
    line-height: 14px;
    font-family: Roboto, "Noto Sans", sans-serif;
}

.style-fill {
    background: #42bd42;
}

.style-stroke {
    display: flex;
    align-items: center;
}

.style-stroke b {
    width: 67px;
    height: 14px;
    background: #000;
}

.style-stroke em {
    margin-left: 4px;
}

.opacity {
    display: flex;
    align-items: center;
    margin-left: 3px;
}

.opacity-name {
    width: 13px;
}

.opacity .field {
    width: 37px;
}

.status-sep {
    width: 1px;
    height: 27px;
    margin-left: 3px;
    background: #a8a8a8;
}

.status-eye {
    width: 16px;
    height: 14px;
    margin-left: 5px;
}

.status-lock {
    width: 14px;
    height: 16px;
    margin-left: 6px;
}

.layer-combo {
    width: 69px;
    height: 27px;
    margin-left: 1px;
    align-items: stretch;
    border: 2px solid #adadad;
    border-left-color: #d0d0d0;
    border-top-color: #d0d0d0;
    font-size: 10px;
    font-weight: bold;
    line-height: 23px;
}

.status-text {
    width: 558px;
    flex: none;
    margin-left: 4px;
    white-space: nowrap;
    letter-spacing: -.4px;
}

.status-sep-coords {
    margin-left: 1px;
}

.mouse-coords {
    width: 66px;
    flex: none;
    margin-left: 2px;
    display: grid;
    grid-template-columns: 25px 36px;
    line-height: 14px;
    font-family: "Liberation Sans", sans-serif;
}

.coord-val {
    font-family: "DejaVu Sans Mono", "Liberation Mono", monospace;
    font-size: 10.500px;
    letter-spacing: .6px;
}

.zoom-field {
    display: flex;
    align-items: center;
    margin-left: 3px;
}

.zoom-name {
    width: 12px;
}

.zoom-field .field {
    width: 45px;
    padding-left: 6px;
}

.grip {
    margin: 16px 0 0 6px;
}
```
